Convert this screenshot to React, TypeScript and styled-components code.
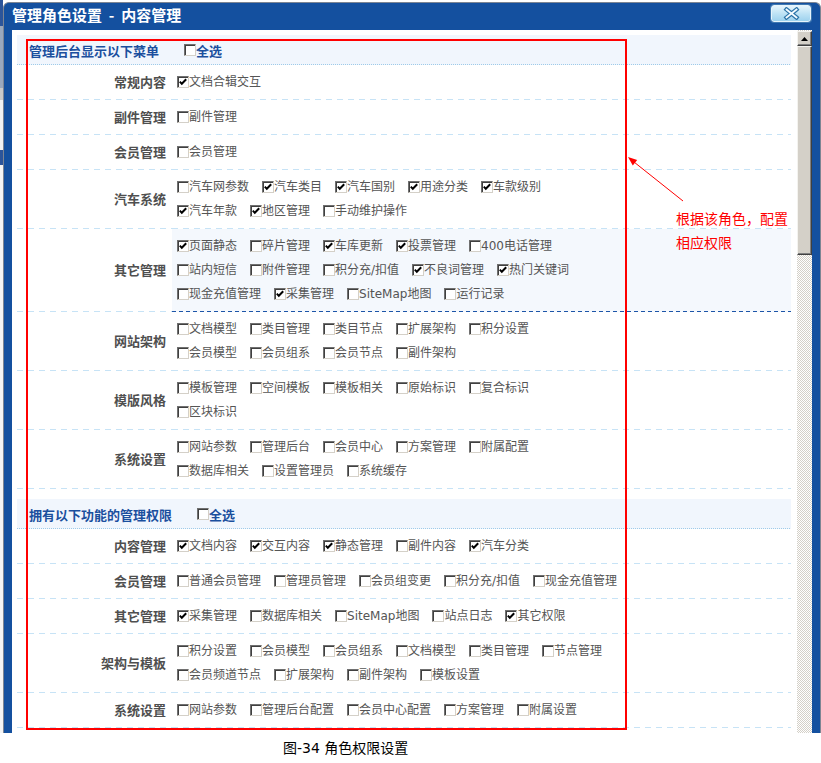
import React from "react";
import styled, { createGlobalStyle } from "styled-components";

const GlobalStyle = createGlobalStyle`
  html, body { margin: 0; padding: 0; background: #ffffff; }
  body { font-family: "DejaVu Sans", "Noto Sans CJK SC", sans-serif; }
  * { box-sizing: border-box; }
`;

const dash = (color: string, on: number, off: number) =>
  `repeating-linear-gradient(to right, ${color} 0 ${on}px, transparent ${on}px ${on + off}px) left bottom / 100% 1px no-repeat`;

const Page = styled.div`
  position: relative;
  width: 821px;
  height: 763px;
  overflow: hidden;
  display: flex;
  flex-direction: column;
`;

const Stage = styled.div`
  display: flex;
  height: 733px;
  flex: none;
`;

const Backdrop = styled.div`
  width: 3px;
  flex: none;
  background: linear-gradient(
    to bottom,
    #2c559a 0 26px,
    #9aa8bd 26px 88px,
    #c9c9c9 88px 100px,
    #f2f2f2 100px 150px,
    #2c559a 150px 165px,
    #f4f4f4 165px
  );
`;

const Window = styled.div`
  flex: 1;
  min-width: 0;
  display: flex;
  flex-direction: column;
  margin-top: 2px;
  border: 1px solid #7d8593;
  border-bottom: none;
  border-radius: 6px 6px 0 0;
  background: #14509f;
`;

const TitleBar = styled.div`
  flex: none;
  height: 27px;
  display: flex;
  align-items: flex-start;
  justify-content: space-between;
  padding: 0 9px 0 8px;
`;

const TitleText = styled.div`
  font-family: "Noto Sans CJK SC", sans-serif;
  font-size: 15px;
  font-weight: bold;
  line-height: 24px;
  color: #ffffff;
  white-space: pre;
`;

const CloseButton = styled.div`
  width: 40px;
  height: 17px;
  margin-top: 2px;
  border: 1px solid #e6f4fc;
  border-radius: 3px;
  background: linear-gradient(to bottom, #e6f5fc 0%, #bfe3f5 50%, #9ed2ee 100%);
  box-shadow: 0 0 0 1px #3f78b0;
  display: flex;
  align-items: center;
  justify-content: center;
`;

const Body = styled.div`
  flex: 1;
  min-height: 0;
  display: flex;
  margin: 0 8px;
`;

const Content = styled.div`
  flex: 1;
  min-width: 0;
  background: #ffffff;
  padding: 5px 6px 0 5px;
  overflow: hidden;
`;

const Section = styled.div`
  margin-bottom: 10px;
`;

const SectionHeader = styled.div`
  height: 30px;
  display: flex;
  align-items: center;
  padding-left: 12px;
  background: ${dash("#9fcbe9", 1, 1)}, #f1f6fd;
  font-family: "Noto Sans CJK SC", sans-serif;
  font-size: 13px;
  font-weight: bold;
  color: #1b4f9e;
`;

const SelectAll = styled.span`
  display: inline-flex;
  align-items: center;
  margin-left: 25px;
`;

const Row = styled.div`
  display: grid;
  grid-template-columns: 155px 1fr;
`;

const LabelCell = styled.div`
  display: flex;
  align-items: center;
  justify-content: flex-end;
  padding: 0 6px 3px 0;
  background: ${dash("#c7e3f6", 6, 5)};
  font-family: "Noto Sans CJK SC", sans-serif;
  font-size: 13px;
  font-weight: bold;
  color: #4f4f4f;
`;

const ContentCell = styled.div<{ $active?: boolean }>`
  padding: 5px 0 6px 5px;
  background: ${(p) =>
    p.$active ? `${dash("#1d55a8", 4, 3)}, #f4f8fd` : dash("#c7e3f6", 6, 5)};
`;

const Line = styled.div`
  display: flex;
  align-items: center;
  height: 24px;
`;

const Item = styled.span`
  display: inline-flex;
  align-items: center;
  margin-right: 13px;
  font-size: 12px;
  color: #555555;
  white-space: nowrap;
  line-height: 16px;
`;

const Box = styled.span`
  flex: none;
  width: 12px;
  height: 12px;
  border: 1px solid;
  border-color: #707070 #d4d0c8 #d4d0c8 #707070;
  box-shadow: inset 1px 1px 0 #404040;
  background: #ffffff;
  display: inline-flex;
  align-items: center;
  justify-content: center;
`;

const ScrollBar = styled.div`
  width: 15px;
  flex: none;
  display: flex;
  flex-direction: column;
  background: repeating-conic-gradient(#d4d0c8 0% 25%, #ffffff 0% 50%) 0 0 / 2px 2px;
`;

const ScrollPart = styled.div<{ $h: number }>`
  height: ${(p) => p.$h}px;
  flex: none;
  background: #d4d0c8;
  border: 1px solid;
  border-color: #f4f3ef #404040 #404040 #f4f3ef;
  box-shadow: inset -1px -1px 0 #808080;
  display: flex;
  align-items: center;
  justify-content: center;
`;

const UpButton = styled(ScrollPart)`
  margin-top: 1px;
`;

const Caption = styled.div`
  height: 30px;
  line-height: 30px;
  padding-left: 283px;
  font-size: 14px;
  color: #000000;
`;

const RedFrame = styled.div`
  position: absolute;
  left: 26px;
  top: 39px;
  width: 601px;
  height: 691px;
  border: 2px solid #ff0000;
  pointer-events: none;
`;

const ArrowSvg = styled.svg`
  position: absolute;
  left: 620px;
  top: 150px;
`;

const Note = styled.div`
  position: absolute;
  left: 676px;
  top: 206px;
  font-family: "Noto Sans CJK SC", sans-serif;
  font-size: 14px;
  line-height: 24px;
  color: #ff0000;
`;

type Group = { label: string; lines: string[][]; active?: boolean };

const menuGroups: Group[] = [
  { label: "常规内容", lines: [["*文档合辑交互"]] },
  { label: "副件管理", lines: [["副件管理"]] },
  { label: "会员管理", lines: [["会员管理"]] },
  {
    label: "汽车系统",
    lines: [
      ["汽车网参数", "*汽车类目", "*汽车国别", "*用途分类", "*车款级别"],
      ["*汽车年款", "*地区管理", "手动维护操作"],
    ],
  },
  {
    label: "其它管理",
    active: true,
    lines: [
      ["*页面静态", "碎片管理", "*车库更新", "*投票管理", "400电话管理"],
      ["站内短信", "附件管理", "积分充/扣值", "*不良词管理", "*热门关键词"],
      ["现金充值管理", "*采集管理", "SiteMap地图", "运行记录"],
    ],
  },
  {
    label: "网站架构",
    lines: [
      ["文档模型", "类目管理", "类目节点", "扩展架构", "积分设置"],
      ["会员模型", "会员组系", "会员节点", "副件架构"],
    ],
  },
  {
    label: "模版风格",
    lines: [
      ["模板管理", "空间模板", "模板相关", "原始标识", "复合标识"],
      ["区块标识"],
    ],
  },
  {
    label: "系统设置",
    lines: [
      ["网站参数", "管理后台", "会员中心", "方案管理", "附属配置"],
      ["数据库相关", "设置管理员", "系统缓存"],
    ],
  },
];

const permGroups: Group[] = [
  { label: "内容管理", lines: [["*文档内容", "*交互内容", "*静态管理", "副件内容", "*汽车分类"]] },
  { label: "会员管理", lines: [["普通会员管理", "管理员管理", "会员组变更", "积分充/扣值", "现金充值管理"]] },
  { label: "其它管理", lines: [["*采集管理", "数据库相关", "SiteMap地图", "站点日志", "*其它权限"]] },
  {
    label: "架构与模板",
    lines: [
      ["积分设置", "会员模型", "会员组系", "文档模型", "类目管理", "节点管理"],
      ["会员频道节点", "扩展架构", "副件架构", "模板设置"],
    ],
  },
  { label: "系统设置", lines: [["网站参数", "管理后台配置", "会员中心配置", "方案管理", "附属设置"]] },
];

const Check: React.FC<{ on?: boolean }> = ({ on }) => (
  <Box>
    {on && (
      <svg width="8" height="8" viewBox="0 0 8 8">
        <polyline points="0.8,3.6 2.8,5.8 7.2,1.2" fill="none" stroke="#000" strokeWidth="2" />
      </svg>
    )}
  </Box>
);

const Option: React.FC<{ spec: string }> = ({ spec }) => {
  const on = spec.startsWith("*");
  const text = on ? spec.slice(1) : spec;
  return (
    <Item>
      <Check on={on} />
      {text}
    </Item>
  );
};

const PermSection: React.FC<{ title: string; groups: Group[] }> = ({ title, groups }) => (
  <Section>
    <SectionHeader>
      {title}
      <SelectAll>
        <Check />
        全选
      </SelectAll>
    </SectionHeader>
    {groups.map((g) => (
      <Row key={g.label}>
        <LabelCell>{g.label}</LabelCell>
        <ContentCell $active={g.active}>
          {g.lines.map((line, i) => (
            <Line key={i}>
              {line.map((s) => (
                <Option key={s} spec={s} />
              ))}
            </Line>
          ))}
        </ContentCell>
      </Row>
    ))}
  </Section>
);

export default function App() {
  return (
    <>
      <GlobalStyle />
      <Page>
        <Stage>
          <Backdrop />
          <Window>
            <TitleBar>
              <TitleText>{"管理角色设置  -  内容管理"}</TitleText>
              <CloseButton>
                <svg width="17" height="13" viewBox="0 0 17 13">
                  <path d="M3.5 2.5 L13.5 10.5 M13.5 2.5 L3.5 10.5" stroke="#2b73a8" strokeWidth="4.2" strokeLinecap="square" />
                  <path d="M3.5 2.5 L13.5 10.5 M13.5 2.5 L3.5 10.5" stroke="#f4fbff" strokeWidth="1.8" strokeLinecap="square" />
                </svg>
              </CloseButton>
            </TitleBar>
            <Body>
              <Content>
                <PermSection title="管理后台显示以下菜单" groups={menuGroups} />
                <PermSection title="拥有以下功能的管理权限" groups={permGroups} />
              </Content>
              <ScrollBar>
                <UpButton $h={15}>
                  <svg width="7" height="4" viewBox="0 0 7 4">
                    <path d="M3.5 0 L7 4 L0 4 Z" fill="#000" />
                  </svg>
                </UpButton>
                <ScrollPart $h={209} />
              </ScrollBar>
            </Body>
          </Window>
        </Stage>
        <Caption>图-34 角色权限设置</Caption>
        <RedFrame />
        <ArrowSvg width="70" height="56" viewBox="0 0 70 56">
          <line x1="63" y1="51" x2="14" y2="12" stroke="#ff0000" strokeWidth="1" />
          <path d="M8 7 L17.2 9.9 L12.8 15.4 Z" fill="#ff0000" />
        </ArrowSvg>
        <Note>
          根据该角色，配置
          <br />
          相应权限
        </Note>
      </Page>
    </>
  );
}
